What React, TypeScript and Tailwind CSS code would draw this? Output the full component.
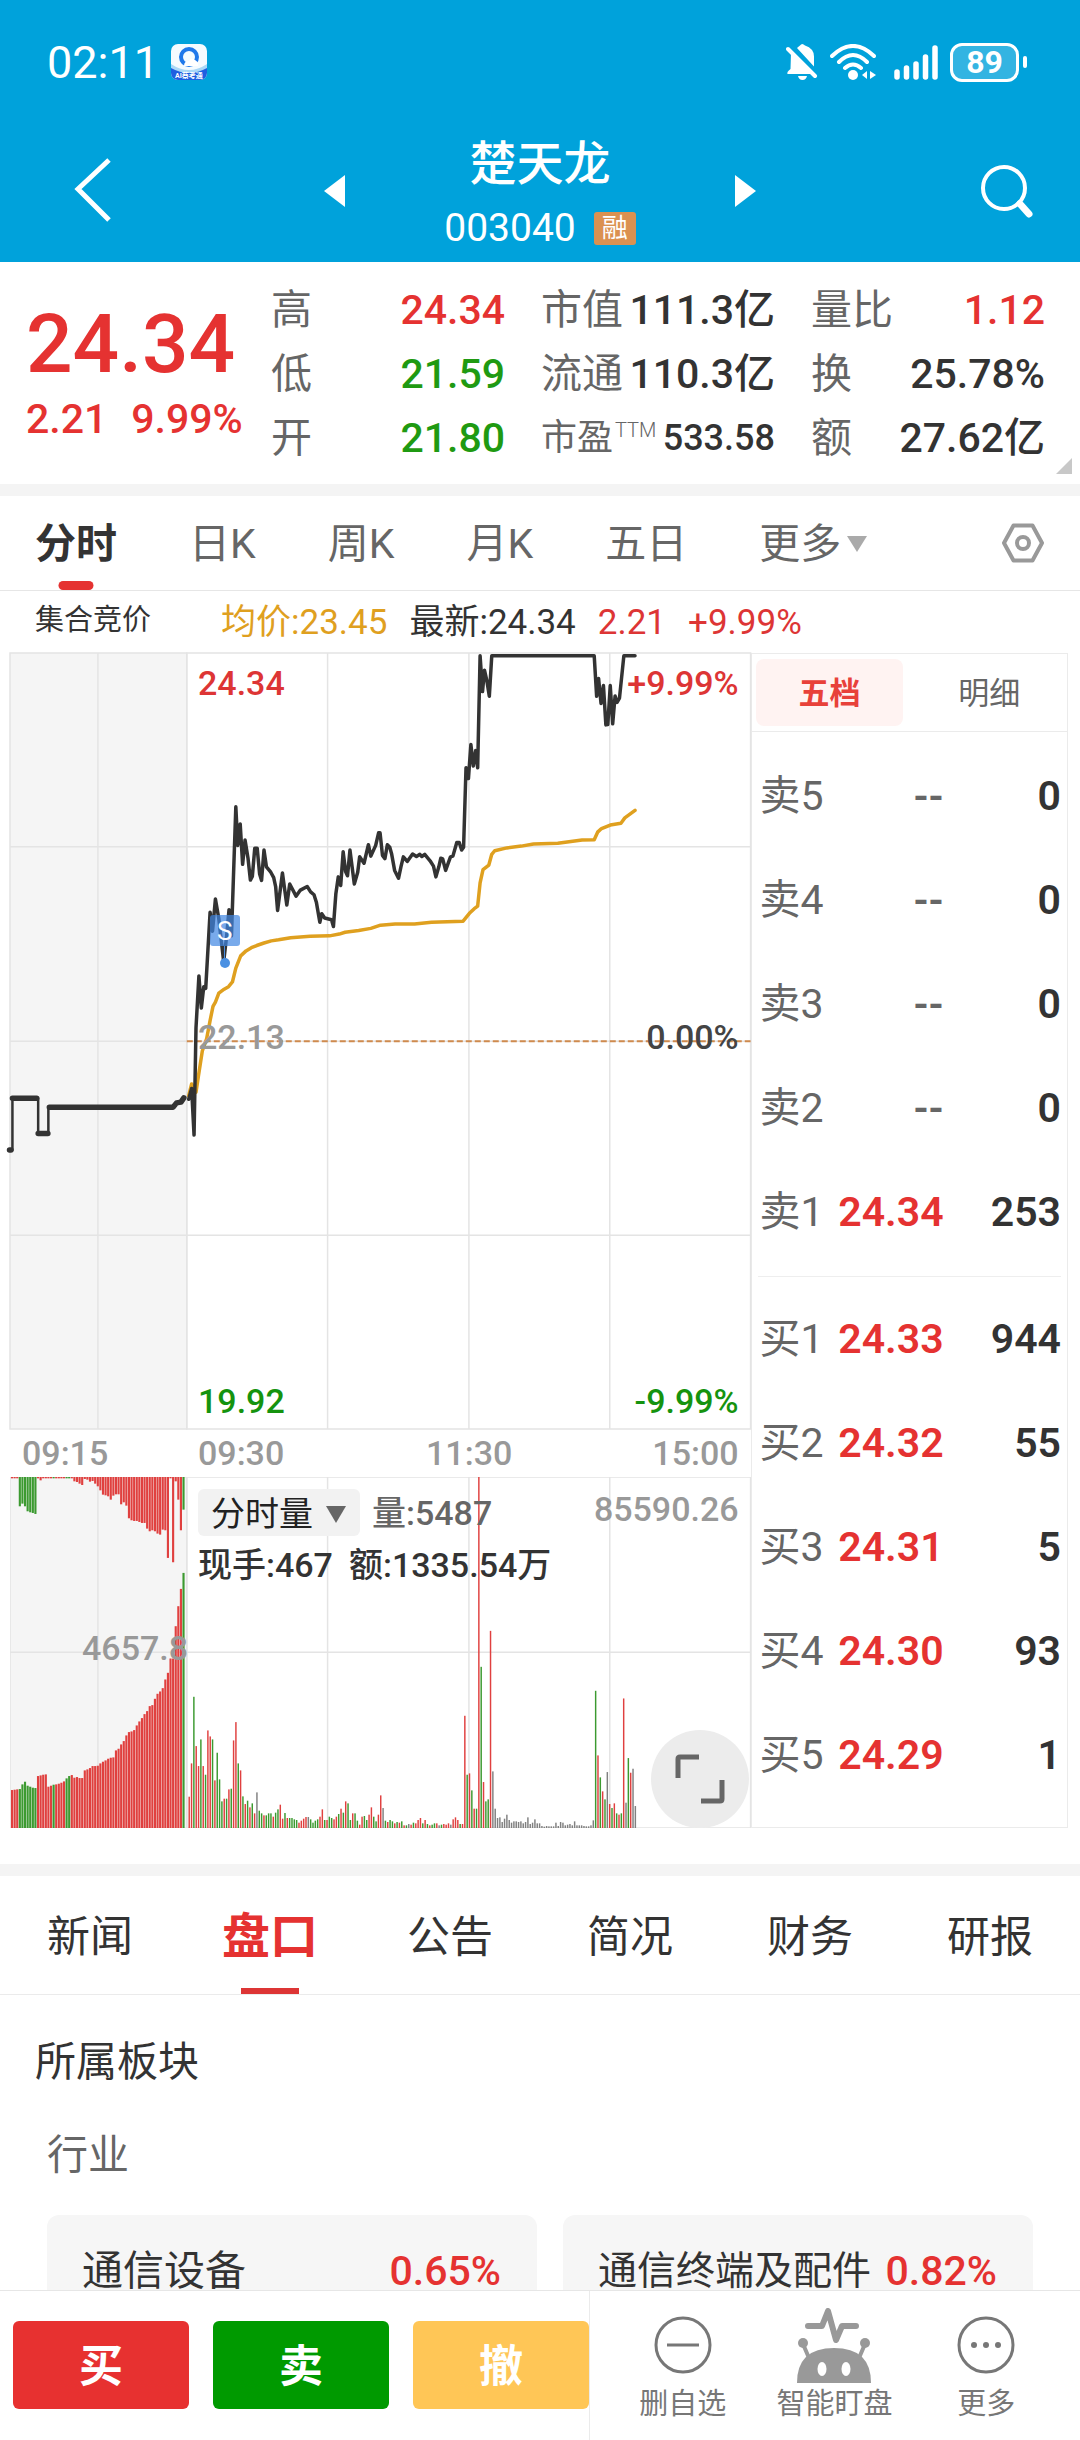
import { useState } from 'react';

type Tone = 'up' | 'down' | 'plain';

type Quote = { label: string; note?: string; value: string; tone: Tone };

type BookRow = { label: string; price: string; volume: string };

const toneClass: Record<Tone, string> = {
  up: 'text-[#e53231]',
  down: 'text-[#1f9a12]',
  plain: 'text-[#333333]',
};

const quoteColumns: Quote[][] = [
  [
    { label: '高', value: '24.34', tone: 'up' },
    { label: '低', value: '21.59', tone: 'down' },
    { label: '开', value: '21.80', tone: 'down' },
  ],
  [
    { label: '市值', value: '111.3亿', tone: 'plain' },
    { label: '流通', value: '110.3亿', tone: 'plain' },
    { label: '市盈', note: 'TTM', value: '533.58', tone: 'plain' },
  ],
  [
    { label: '量比', value: '1.12', tone: 'up' },
    { label: '换', value: '25.78%', tone: 'plain' },
    { label: '额', value: '27.62亿', tone: 'plain' },
  ],
];

const sells: BookRow[] = [
  { label: '卖5', price: '--', volume: '0' },
  { label: '卖4', price: '--', volume: '0' },
  { label: '卖3', price: '--', volume: '0' },
  { label: '卖2', price: '--', volume: '0' },
  { label: '卖1', price: '24.34', volume: '253' },
];

const buys: BookRow[] = [
  { label: '买1', price: '24.33', volume: '944' },
  { label: '买2', price: '24.32', volume: '55' },
  { label: '买3', price: '24.31', volume: '5' },
  { label: '买4', price: '24.30', volume: '93' },
  { label: '买5', price: '24.29', volume: '1' },
];

const periods = ['分时', '日K', '周K', '月K', '五日'];
const sections = ['新闻', '盘口', '公告', '简况', '财务', '研报'];

// Chart x: 22..1547, price y: 37..2207
const auctionLine = '21,1427 27,1427 27,1282 80,1282 80,1381 101,1381 101,1307 350,1307 358,1305 365,1295 374,1293 380,1281';

const priceLine =
  '390,1285 396,1255 401,1385 405,1085 411,940 416,1030 421,970 425,975 434,762 439,815 445,725 452,780 462,900 468,830 473,755 478,828 ' +
  '487,467 491,575 496,515 501,628 506,560 512,610 517,672 521,662 526,583 531,583 536,655 540,673 545,588 550,635 559,650 565,665 ' +
  '569,690 573,757 583,652 592,742 598,683 611,717 620,700 634,690 641,705 648,713 653,735 660,790 664,766 670,778 684,783 688,802 ' +
  '693,710 698,663 703,687 708,593 713,648 717,660 722,588 731,683 738,650 742,607 751,625 760,573 765,605 775,575 781,540 784,540 ' +
  '789,603 794,612 799,573 804,580 808,600 814,645 822,667 827,635 832,607 840,620 851,599 859,606 866,600 870,606 876,600 887,618 ' +
  '894,633 899,663 905,635 909,611 913,613 919,645 929,607 934,605 942,567 947,567 952,588 956,580 961,358 966,388 971,293 976,353 ' +
  '981,310 985,358 990,45 995,145 999,85 1004,115 1009,158 1014,45 1225,45 1230,158 1234,108 1239,178 1244,128 1249,238 1253,237 ' +
  '1258,128 1263,235 1268,157 1272,175 1277,163 1286,45 1309,45';

const averageLine =
  '390,1275 396,1242 405,1265 410,1220 418,1150 427,1115 434,1065 440,1025 445,1013 452,988 463,977 472,970 480,957 487,918 497,884 ' +
  '508,870 519,861 530,855 545,848 560,842 575,839 600,833 640,829 680,828 700,823 712,818 740,813 765,807 785,798 815,795 855,795 ' +
  '890,790 955,787 968,765 978,752 985,745 990,680 996,643 1008,630 1014,600 1020,590 1045,582 1075,577 1100,571 1150,569 1200,560 ' +
  '1225,559 1232,538 1240,528 1258,518 1280,513 1288,498 1309,477';

// Height and direction of every bar, r = up, g = down, k = flat
const minuteVolume = (
  '94r 194r 394g 246r 186r 266g 186r 160g 293r 275r 266g 143r 226g 146g 80g 88r 88g 116r 118g 263r 318r 194g 173r 95g 72r 82g 62r 74g 44r 107k ' +
  '52g 44g 38r 38g 44g 44g 34r 46g 56g 70r 28r 45g 30r 30g 30g 26g 24g 16r 22r 28r 33r 33k 26g 16g 22g 26g 34r 56r 24g 24r 34g 30g 26r 34r ' +
  '42g 58r 46g 80r 74g 24g 44r 44g 22g 10r 34r 36g 24g 40r 62r 34g 20g 40r 98r 60k 22g 18r 24g 20g 14r 18g 16r 20g 8r 8g 12k 10r 16g 14r ' +
  '24r 30r 14g 24r 12g 8r 10g 14g 14r 8k 10g 12r 10r 14r 10k 26r 32r 24r 12g 12r 337r 160g 164r 113g 58r 58g 1054r 484g 138r 80g 86g 592r ' +
  '170k 58k 30k 32k 18k 28k 40k 24k 16k 20k 20k 18k 20k 14k 18k 32k 12k 16k 26k 14k 14k 6k 4k 6k 5k 5k 5k 16k 6k 18k 16k 8k 10k 12k 8k 20k ' +
  '8k 8k 8k 6k 5k 5k 8k 23k 412g 218r 152g 110r 86g 168k 72r 60g 74r 44g 40r 44g 389r 76k 210g 166r 178k 66k'
).split(' ');

const auctionMatched = (
  '114r 115r 116r 117g 131g 139g 127g 124g 121g 120g 156r 158r 160r 161r 124r 127r 130g 131r 133r 136r 140r 149g 156g 159r 151r 153r 150r 150r ' +
  '173r 176r 180r 186r 186r 187r 194r 199r 203r 208r 211r 212r 233r 238r 251r 261r 278r 288r 290r 294r 308r 320r 330r 342r 351r 366r 369r ' +
  '388r 403r 410r 420r 446r 466r 509r 509r 606r 666r 718r 766g'
).split(' ');

const auctionUnmatched = (
  '4r 4r 4r 88g 80g 88g 103g 106g 108g 111g 4r 10r 4r 4r 4r 4r 4g 4r 4r 4r 4r 4g 4g 4r 13r 15r 20r 24r 6r 8r 14r 12r 20r 28r 40r 53r 55r 58r ' +
  '68r 56r 52r 52r 82r 76r 86r 124r 130r 132r 132r 135r 138r 138r 155r 163r 160r 163r 170r 173r 158r 160r 243r 4r 256r 13r 68r 160r 98g'
).split(' ');

const barColor: Record<string, string> = { r: '#e0403f', g: '#3c9a30', k: '#808080' };

function toBar(code: string) {
  return { size: parseInt(code, 10), fill: barColor[code.slice(-1)] };
}

function Grid({ top, bottom, rows }: { top: number; bottom: number; rows: number[] }) {
  return (
    <g stroke="#e4e4e4" strokeWidth="1.5" fill="none">
      <rect x="22" y={top} width="364" height={bottom - top} fill="#f5f5f5" vectorEffect="non-scaling-stroke" />
      <rect x="386" y={top} width="1161" height={bottom - top} vectorEffect="non-scaling-stroke" />
      {[203, 676, 967, 1257].map((x) => (
        <line key={x} x1={x} x2={x} y1={top} y2={bottom} vectorEffect="non-scaling-stroke" />
      ))}
      {rows.map((y) => (
        <line key={y} x1="22" x2="1547" y1={y} y2={y} vectorEffect="non-scaling-stroke" />
      ))}
    </g>
  );
}

function PriceChart() {
  return (
    <div className="relative h-[776px]">
      <svg viewBox="22 37 1525 2170" preserveAspectRatio="none" className="block h-full w-full overflow-visible">
        <Grid top={37} bottom={2207} rows={[579, 1123, 1665]} />
        <line x1="386" x2="1547" y1="1123" y2="1123" stroke="#cf8a4e" strokeWidth="2" strokeDasharray="6 3" vectorEffect="non-scaling-stroke" />
        <g fill="none" strokeLinejoin="round" strokeLinecap="round">
          <polyline points={averageLine} stroke="#dfa01f" strokeWidth="3.5" vectorEffect="non-scaling-stroke" />
          <polyline points={auctionLine} stroke="#333333" strokeWidth="2.5" vectorEffect="non-scaling-stroke" />
          <path
            d="M21 1427h3M27 1282h50M80 1381h20M103 1307h247l8 0l7 -12l9 -2l6 -12"
            stroke="#333333"
            strokeWidth="5.5"
            vectorEffect="non-scaling-stroke"
          />
          <polyline points={priceLine} stroke="#333333" strokeWidth="3.5" vectorEffect="non-scaling-stroke" />
        </g>
      </svg>

      {/* Sell marker */}
      <div className="absolute left-[29%] top-[262px] flex -translate-x-1/2 flex-col items-center">
        <span className="flex h-[31px] w-[30px] items-center justify-center rounded-[3px] bg-[#3f86e3]/70 text-[26px] leading-none text-white">S</span>
        <span className="h-3 w-px bg-[#4a90e2]" />
        <span className="h-2.5 w-2.5 rounded-full bg-[#4a90e2]" />
      </div>

      <div className="absolute inset-y-0 left-[188px] right-3 text-[34px] font-medium leading-10">
        <div className="absolute inset-x-0 top-2.5 flex justify-between text-[#dd3535]">
          <span>24.34</span>
          <span>+9.99%</span>
        </div>
        <div className="absolute inset-x-0 top-[364px] flex justify-between">
          <span className="text-[#999999]">22.13</span>
          <span className="text-[#444444]">0.00%</span>
        </div>
        <div className="absolute inset-x-0 bottom-2 flex justify-between text-[#15930f]">
          <span>19.92</span>
          <span>-9.99%</span>
        </div>
      </div>
    </div>
  );
}

function VolumeChart() {
  return (
    <div className="relative h-[351px]">
      <svg viewBox="22 52 1525 1054" preserveAspectRatio="none" className="block h-full w-full">
        <Grid top={52} bottom={1106} rows={[578]} />
        {auctionMatched.map(toBar).map((bar, i) => (
          <rect key={i} x={24 + i * 5.35} y={1106 - bar.size} width="4.4" height={bar.size} fill={bar.fill} />
        ))}
        {auctionUnmatched.map(toBar).map((bar, i) => (
          <rect key={i} x={24 + i * 5.35} y="52" width="4.4" height={bar.size} fill={bar.fill} />
        ))}
        {minuteVolume.map(toBar).map((bar, i) => (
          <rect key={i} x={389.5 + i * 4.81} y={1106 - bar.size} width="3" height={bar.size} fill={bar.fill} />
        ))}
      </svg>

      <div className="absolute left-[188px] right-3 top-3 flex items-start text-[34px] font-medium leading-10">
        <button className="flex h-[47px] items-center gap-3 rounded-md bg-[#f2f2f2] px-[13px] pt-0.5 font-normal text-[#222222]">
          分时量
          <svg viewBox="0 0 22 20" className="h-5 w-[22px]">
            <path d="M1 2h20L11 19z" fill="#666666" />
          </svg>
        </button>
        <span className="ml-3 pt-1 text-[#666666]">量:5487</span>
        <span className="ml-auto text-[#999999]">85590.26</span>
      </div>
      <p className="absolute left-[188px] top-[68px] flex gap-4 text-[34px] font-medium leading-10 text-[#333333]">
        <span>现手:467</span>
        <span>额:1335.54万</span>
      </p>
      <span className="absolute left-[72px] top-[151px] text-[34px] font-medium leading-10 text-[#999999]">4657.8</span>

      <button
        aria-label="全屏"
        className="absolute bottom-0 right-0.5 flex h-[98px] w-[98px] items-center justify-center rounded-full bg-[#ececec]"
      >
        <svg viewBox="0 0 52 52" className="h-[52px] w-[52px]" fill="none" stroke="#666666" strokeWidth="5">
          <path d="M4 25V6q0-2 2-2h19M48 27v19q0 2-2 2H27" />
        </svg>
      </button>
    </div>
  );
}

function BookTable({ rows, caption }: { rows: BookRow[]; caption: string }) {
  return (
    <table className="w-full" aria-label={caption}>
      <tbody>
        {rows.map((row) => (
          <tr key={row.label} className="h-[104px] text-[41px] leading-none">
            <th scope="row" className="w-[86px] pl-2 text-left font-normal text-[#666666]">{row.label}</th>
            <td className={`w-[106px] text-right font-semibold ${row.price === '--' ? 'text-[#666666]' : 'text-[#e53231]'}`}>{row.price}</td>
            <td className="pr-1.5 text-right font-semibold text-[#333333]">{row.volume}</td>
          </tr>
        ))}
      </tbody>
    </table>
  );
}

function StatusBar() {
  return (
    <div className="flex h-[124px] items-center justify-between pl-[47px] pr-[53px]">
      <div className="flex items-center gap-3">
        <span className="text-[45px] leading-none">02:11</span>
        <svg viewBox="0 0 36 36" className="h-9 w-9">
          <defs>
            <clipPath id="app-icon">
              <rect width="36" height="36" rx="7" />
            </clipPath>
          </defs>
          <g clipPath="url(#app-icon)">
            <rect width="36" height="36" fill="#f4fbff" />
            <path d="M0 23q18 9 36 0v13H0z" fill="#1e5fe0" />
            <path d="M0 20q18 12 36 0v4q-18 10-36 0z" fill="#a9d8f7" />
            <circle cx="18" cy="13" r="8" fill="none" stroke="#1f78ea" strokeWidth="4" />
            <path d="M13 22q0-5 5-5 2-4 6-1 4 2 3 6z" fill="#ffffff" />
            <text x="18" y="34" fontSize="7" fontWeight="700" fill="#ffffff" textAnchor="middle">AI蔡考通</text>
          </g>
        </svg>
      </div>

      <div className="flex items-center">
        <svg viewBox="0 0 32 36" className="h-9 w-8" fill="#ffffff">
          <path d="M5 9l22 21H1.500q-1-2 3-5z" />
          <path d="M11 4q2-2 3-2.500q2-3 5 0q9 3 9 11v10z" />
          <path d="M2 5l27 27" stroke="#ffffff" strokeWidth="4" strokeLinecap="round" />
          <path d="M12 32h9q-1 4-4.500 4T12 32z" />
        </svg>
        <svg viewBox="0 0 46 36" className="ml-3 h-9 w-[46px]" fill="none" stroke="#ffffff" strokeWidth="4" strokeLinecap="round">
          <path d="M2 12Q23-8 44 12M9 18Q23 4 37 18M15 24q8-7 16 0" />
          <circle cx="23" cy="31" r="5" fill="#ffffff" stroke="none" />
          <path d="M37 27v8l-5-4zM40 27v8l6-4z" fill="#ffffff" stroke="none" />
        </svg>
        <svg viewBox="0 0 44 36" className="ml-[18px] h-9 w-11" stroke="#ffffff" strokeWidth="5.500" strokeLinecap="round">
          <path d="M3 28v5M12.500 24v9M22 20v13M31.500 13v20M41 4v29" />
        </svg>
        <div className="ml-3 flex items-center gap-1">
          <div className="flex h-[39px] w-[69px] items-center justify-center rounded-xl border-[3px] border-white bg-white/20 text-[32px] font-bold leading-none">89</div>
          <div className="h-3 w-1 rounded-sm bg-white" />
        </div>
      </div>
    </div>
  );
}

function Header() {
  return (
    <header className="shrink-0 bg-[#00a2db] text-white">
      <StatusBar />
      <div className="grid h-[138px] grid-cols-[1fr_432px_1fr] items-center pb-1">
        <button aria-label="返回" className="justify-self-start pl-[72px]">
          <svg viewBox="0 0 40 66" className="h-[66px] w-10" fill="none" stroke="#ffffff" strokeWidth="5">
            <path d="M37 2L6 31l31 31" />
          </svg>
        </button>
        <div className="flex items-center justify-between">
          <button aria-label="上一只">
            <svg viewBox="0 0 21 32" className="h-8 w-[21px]" fill="#ffffff">
              <path d="M21 0v32L0 16z" />
            </svg>
          </button>
          <div className="flex flex-col items-center gap-5 pt-1.5">
            <h1 className="text-[47px] font-medium leading-[48px]">楚天龙</h1>
            <div className="flex items-center gap-[18px] leading-10">
              <span className="text-[39px]">003040</span>
              <span className="flex h-[33px] w-[42px] items-center justify-center rounded-[3px] bg-[#db9150] text-[26px]">融</span>
            </div>
          </div>
          <button aria-label="下一只">
            <svg viewBox="0 0 21 32" className="h-8 w-[21px]" fill="#ffffff">
              <path d="M0 0v32l21-16z" />
            </svg>
          </button>
        </div>
        <button aria-label="搜索" className="justify-self-end pr-[45px]">
          <svg viewBox="0 0 56 60" className="h-[60px] w-14" fill="none" stroke="#ffffff" strokeLinecap="round">
            <circle cx="25" cy="27" r="21" strokeWidth="4" />
            <path d="M40 42l2 2" strokeWidth="5" />
            <path d="M42 44l8 9" strokeWidth="7" />
          </svg>
        </button>
      </div>
    </header>
  );
}

function QuoteSummary() {
  return (
    <section className="relative flex h-[222px] justify-between pl-[26px] pr-[35px]">
      <div className="pt-9 font-medium text-[#e53231]">
        <p className="text-[82px] leading-[92px]">24.34</p>
        <p className="mt-1 flex gap-6 text-[41px] leading-[50px]">
          <span>2.21</span>
          <span>9.99%</span>
        </p>
      </div>
      <div className="flex gap-9 pt-4">
        {quoteColumns.map((column, i) => (
          <dl key={i} className="w-[234px]">
            {column.map((q) => (
              <div key={q.label} className="flex h-16 items-center justify-between whitespace-nowrap leading-none">
                <dt className={q.note ? 'flex items-start text-[36px] text-[#666666]' : 'text-[41px] text-[#666666]'}>
                  {q.label}
                  {q.note && <span className="ml-0.5 text-[20px] font-light">{q.note}</span>}
                </dt>
                <dd className={`font-medium ${toneClass[q.tone]} ${q.note ? 'text-[36px]' : 'text-[41px]'}`}>{q.value}</dd>
              </div>
            ))}
          </dl>
        ))}
      </div>
      <svg viewBox="0 0 16 16" className="absolute bottom-2.5 right-2 h-4 w-4">
        <path d="M16 0v16H0z" fill="#c8c8c8" />
      </svg>
    </section>
  );
}

function PeriodTabs() {
  const [active, setActive] = useState('分时');

  return (
    <nav className="flex h-[95px] items-center border-b border-[#e6e6e6] pl-[35px] pr-9 text-[41px] leading-none text-[#666666]">
      <div className="flex h-full gap-[72px]">
        {periods.map((p) => (
          <button key={p} onClick={() => setActive(p)} className={`relative h-full pt-0.5 ${p === active ? 'font-bold text-[#333333]' : ''}`}>
            {p}
            {p === active && <span className="absolute bottom-0 left-1/2 h-[9px] w-[35px] -translate-x-1/2 rounded-full bg-[#e53231]" />}
          </button>
        ))}
        <button className="flex h-full items-center gap-1.5 pt-0.5">
          更多
          <svg viewBox="0 0 20 16" className="h-4 w-5">
            <path d="M0 0h20L10 16z" fill="#aaaaaa" />
          </svg>
        </button>
      </div>
      <button aria-label="设置" className="ml-auto">
        <svg viewBox="0 0 42 40" className="h-10 w-[42px]" fill="none" stroke="#999999" strokeWidth="4" strokeLinejoin="round">
          <path d="M11.500 2.500h19L40 20l-9.500 17.500h-19L2 20z" />
          <circle cx="21" cy="20" r="6" />
        </svg>
      </button>
    </nav>
  );
}

function OrderBook() {
  const [tab, setTab] = useState('五档');

  return (
    <aside className="border border-[#ebebeb]">
      <div className="grid h-[78px] grid-cols-2 gap-3 border-b border-[#ebebeb] px-1 py-[5px] text-[31px] leading-none">
        {['五档', '明细'].map((t) => (
          <button
            key={t}
            onClick={() => setTab(t)}
            className={t === tab ? 'rounded-lg bg-[#fff3f2] pt-0.5 font-bold text-[#e8413a]' : 'pt-0.5 text-[#666666]'}
          >
            {t}
          </button>
        ))}
      </div>
      <div className="pt-3">
        <BookTable rows={sells} caption="卖盘" />
        <div className="mx-1.5 mb-2.5 mt-3 border-t border-[#eeeeee]" />
        <BookTable rows={buys} caption="买盘" />
      </div>
    </aside>
  );
}

function SectionTabs() {
  const [active, setActive] = useState('盘口');

  return (
    <nav className="grid h-[119px] grid-cols-6 border-b border-[#ebebeb]">
      {sections.map((s) => (
        <button
          key={s}
          onClick={() => setActive(s)}
          className={`relative pt-1 leading-none ${s === active ? 'text-[48px] font-bold text-[#e53231]' : 'text-[43px] text-[#333333]'}`}
        >
          {s}
          {s === active && <span className="absolute bottom-0 left-1/2 h-1.5 w-[58px] -translate-x-1/2 bg-[#dd3535]" />}
        </button>
      ))}
    </nav>
  );
}

function Sectors() {
  const items = [
    { name: '通信设备', change: '0.65%' },
    { name: '通信终端及配件', change: '0.82%' },
  ];

  return (
    <section>
      <h2 className="pl-[35px] pt-[42px] text-[41px] leading-[50px] text-[#333333]">所属板块</h2>
      <h3 className="pl-[47px] pt-[43px] text-[41px] leading-[50px] text-[#666666]">行业</h3>
      <div className="grid grid-cols-[49fr_47fr] gap-[26px] px-[47px] pb-10 pt-[35px]">
        {items.map((item) => (
          <a
            key={item.name}
            href="#"
            className="flex h-28 items-center justify-between whitespace-nowrap rounded-xl bg-[#f6f6f6] pl-[35px] pr-9 text-[41px] leading-none text-[#333333]"
          >
            {/* Long sector names drop one size to stay on a single line */}
            <span className={item.name.length > 6 ? 'text-[39px]' : ''}>{item.name}</span>
            <span className="font-medium text-[#e53231]">{item.change}</span>
          </a>
        ))}
      </div>
    </section>
  );
}

function ActionBar() {
  return (
    <footer className="grid h-[150px] shrink-0 grid-cols-[589fr_491fr] border-t border-[#e6e6e6] bg-white">
      <div className="grid grid-cols-3 gap-6 pb-[31px] pl-[13px] pt-[30px] text-[44px] font-bold leading-none text-white">
        <button className="rounded-md bg-[#e73130] pt-1">买</button>
        <button className="rounded-md bg-[#009a00] pt-1">卖</button>
        <button className="rounded-md bg-[#ffc656] pt-1">撤</button>
      </div>
      <div className="grid grid-cols-3 items-end border-l border-[#ebebeb] pb-4 pl-[17px] pr-[18px] text-[29px] leading-10 text-[#777777]">
        <button className="flex flex-col items-center gap-2.5">
          <svg viewBox="0 0 58 58" className="h-[58px] w-[58px]" fill="none" stroke="#777777" strokeWidth="3">
            <circle cx="29" cy="29" r="27" />
            <path d="M13 29h32" />
          </svg>
          删自选
        </button>
        <button className="flex flex-col items-center">
          <svg viewBox="0 0 76 76" className="h-[76px] w-[76px]" fill="none" stroke="#999999" strokeLinecap="round" strokeLinejoin="round">
            <path d="M12 18h14l6-15 8 29 6-14h14" strokeWidth="6" />
            <path d="M7 36l6 14M69 36l-6 14" strokeWidth="4" />
            <circle cx="7" cy="35" r="5" fill="#999999" stroke="none" />
            <circle cx="69" cy="35" r="5" fill="#999999" stroke="none" />
            <path d="M1 75q0-35 37-35t37 35z" fill="#999999" stroke="none" />
            <ellipse cx="26" cy="61" rx="4.500" ry="7" fill="#ffffff" stroke="none" />
            <ellipse cx="50" cy="61" rx="4.500" ry="7" fill="#ffffff" stroke="none" />
          </svg>
          <span className="whitespace-nowrap">智能盯盘</span>
        </button>
        <button className="flex flex-col items-center gap-2.5">
          <svg viewBox="0 0 58 58" className="h-[58px] w-[58px]" fill="none" stroke="#777777" strokeWidth="3">
            <circle cx="29" cy="29" r="27" />
            <g fill="#777777" stroke="none">
              <circle cx="17" cy="29" r="3" />
              <circle cx="29" cy="29" r="3" />
              <circle cx="41" cy="29" r="3" />
            </g>
          </svg>
          更多
        </button>
      </div>
    </footer>
  );
}

export default function App() {
  return (
    <div className="flex h-screen flex-col bg-white font-[Roboto,'Noto_Sans_CJK_SC',sans-serif] text-[#333333]">
      <Header />
      <main className="min-h-0 flex-1 overflow-y-auto [scrollbar-width:none]">
        <QuoteSummary />
        <div className="h-3 bg-[#f4f4f4]" />
        <PeriodTabs />

        <div className="flex h-[62px] items-center gap-[22px] pl-[35px] text-[35px] leading-none">
          <span className="mr-12 pb-1 text-[29px]">集合竞价</span>
          <span className="text-[#dfa01f]">均价:23.45</span>
          <span>最新:24.34</span>
          <span className="text-[#dd3535]">2.21</span>
          <span className="text-[#dd3535]">+9.99%</span>
        </div>

        <div className="grid grid-cols-[7fr_3fr] pb-9 pl-2.5 pr-3">
          <div>
            <PriceChart />
            <div className="relative flex h-12 items-center text-[34px] font-medium leading-10 text-[#999999]">
              <span className="w-[188px] pl-3">09:15</span>
              <span>09:30</span>
              <span className="absolute left-[62%] -translate-x-1/2">11:30</span>
              <span className="ml-auto pr-3">15:00</span>
            </div>
            <VolumeChart />
          </div>
          <OrderBook />
        </div>

        <div className="h-3 bg-[#f4f4f4]" />
        <SectionTabs />
        <Sectors />
      </main>
      <ActionBar />
    </div>
  );
}
